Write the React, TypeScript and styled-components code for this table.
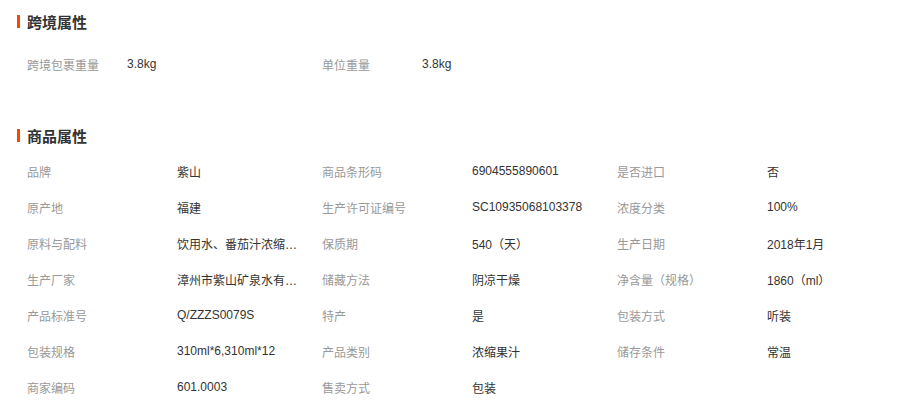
import styled, { createGlobalStyle } from "styled-components";

const GlobalStyle = createGlobalStyle`
  body {
    margin: 0;
    background: #fff;
    font-family: "Liberation Sans", "Noto Sans CJK SC", sans-serif;
  }
`;

const Page = styled.div`
  padding: 3px 17px 0;
  width: 902px;
  box-sizing: border-box;
`;

const Section = styled.section<{ $gap?: number }>`
  margin-bottom: ${(p) => p.$gap ?? 0}px;
`;

const Title = styled.h3`
  display: flex;
  align-items: center;
  margin: 0;
  height: 36px;
  font-size: 15px;
  font-weight: bold;
  color: #333;

  &::before {
    content: "";
    width: 3px;
    height: 13px;
    margin-right: 7px;
    background: #ff4400;
  }
`;

const Grid = styled.div<{ $top?: number }>`
  display: grid;
  grid-template-columns: repeat(3, 295px);
  padding-left: 10px;
  margin-top: ${(p) => p.$top ?? 0}px;
`;

const Cell = styled.div<{ $labelWidth: number }>`
  display: grid;
  grid-template-columns: ${(p) => p.$labelWidth}px 122px;
  height: 36px;
  align-items: center;
  font-size: 12px;
`;

const Label = styled.span`
  color: #999;
  white-space: nowrap;
`;

const Value = styled.span`
  color: #333;
  white-space: nowrap;
  overflow: hidden;
  text-overflow: ellipsis;
`;

type Attr = [string, string];

const crossBorder: Attr[] = [
  ["跨境包裹重量", "3.8kg"],
  ["单位重量", "3.8kg"],
];

const goods: Attr[] = [
  ["品牌", "紫山"],
  ["商品条形码", "6904555890601"],
  ["是否进口", "否"],
  ["原产地", "福建"],
  ["生产许可证编号", "SC10935068103378"],
  ["浓度分类", "100%"],
  ["原料与配料", "饮用水、番茄汁浓缩液、白砂糖"],
  ["保质期", "540（天）"],
  ["生产日期", "2018年1月"],
  ["生产厂家", "漳州市紫山矿泉水有限公司"],
  ["储藏方法", "阴凉干燥"],
  ["净含量（规格）", "1860（ml）"],
  ["产品标准号", "Q/ZZZS0079S"],
  ["特产", "是"],
  ["包装方式", "听装"],
  ["包装规格", "310ml*6,310ml*12"],
  ["产品类别", "浓缩果汁"],
  ["储存条件", "常温"],
  ["商家编码", "601.0003"],
  ["售卖方式", "包装"],
];

const AttrGrid = ({ items, labelWidth, top }: { items: Attr[]; labelWidth: number; top?: number }) => (
  <Grid $top={top}>
    {items.map(([k, v]) => (
      <Cell key={k} $labelWidth={labelWidth}>
        <Label>{k}</Label>
        <Value>{v}</Value>
      </Cell>
    ))}
  </Grid>
);

export default function App() {
  return (
    <>
      <GlobalStyle />
      <Page>
        <Section $gap={35}>
          <Title>跨境属性</Title>
          <AttrGrid items={crossBorder} labelWidth={100} top={7} />
        </Section>
        <Section>
          <Title>商品属性</Title>
          <AttrGrid items={goods} labelWidth={150} />
        </Section>
      </Page>
    </>
  );
}
